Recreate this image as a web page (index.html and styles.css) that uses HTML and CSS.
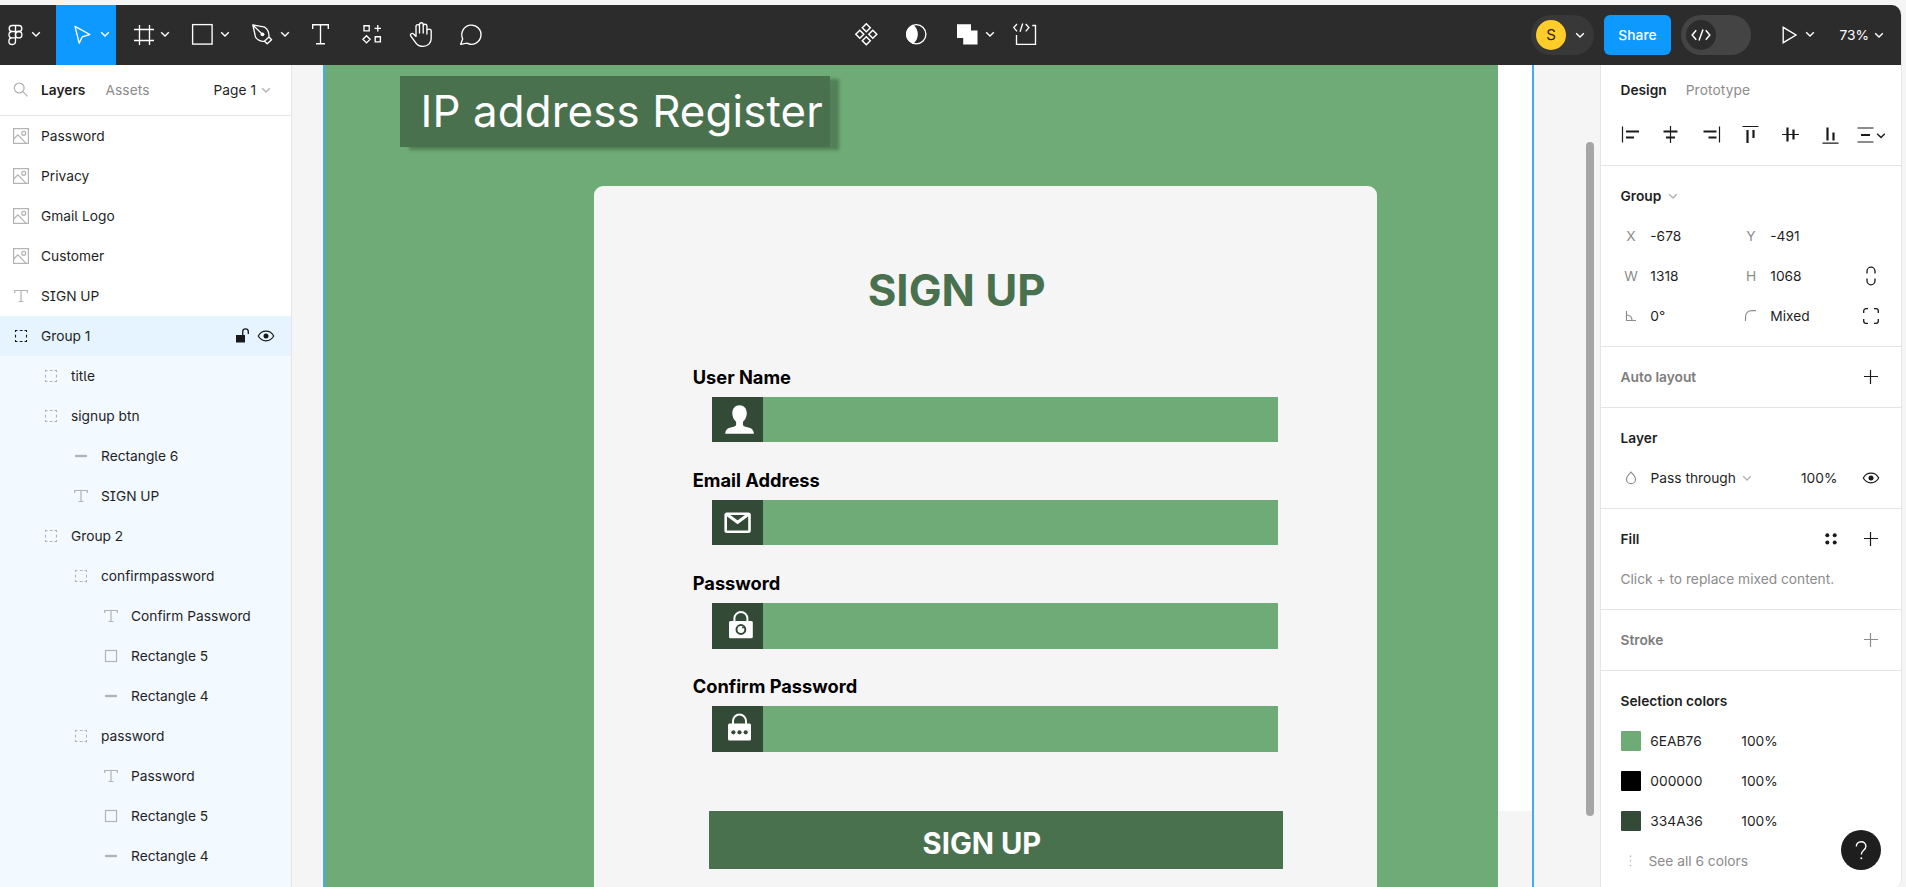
FILE: index.html
```html
<!DOCTYPE html>
<html lang="en">
<head>
<meta charset="utf-8">
<title>IP address Register</title>
<link rel="stylesheet" href="styles.css">
</head>
<body>
<svg class="defs" aria-hidden="true">
  <symbol id="chev" viewBox="0 0 10 10"><path d="M1.2 3.2 5 7l3.800-3.800" fill="none" stroke="currentColor" stroke-width="1.4"/></symbol>
  <symbol id="image" viewBox="0 0 20 20"><g fill="none" stroke="currentColor" stroke-width="1.200"><rect x="2.600" y="2.600" width="14.800" height="14.800"/><circle cx="12.700" cy="7.300" r="2"/><path d="M2.800 12.800 7 8.800l8 8.500"/></g></symbol>
  <symbol id="text" viewBox="0 0 20 20"><path d="M3.700 7V4.500h12.600V7M10 4.500v11M7.600 15.500h4.800" fill="none" stroke="currentColor" stroke-width="1.200"/></symbol>
  <symbol id="group" viewBox="0 0 20 20"><path d="M4.500 6v-1.500h2M8.800 4.500h2.800M13.500 4.500h2v1.500M15.500 8.700v2.800M15.500 14v1.500h-2M11.500 15.500h-2.800M6.500 15.500h-2v-1.500M4.500 11.500v-2.800" fill="none" stroke="currentColor" stroke-width="1.100"/></symbol>
  <symbol id="line" viewBox="0 0 20 20"><path d="M4 10h12" stroke="currentColor" stroke-width="2.400"/></symbol>
  <symbol id="rect" viewBox="0 0 20 20"><rect x="4.500" y="4.500" width="11" height="11" fill="none" stroke="currentColor" stroke-width="1.200"/></symbol>
  <symbol id="eye" viewBox="0 0 20 20"><path d="M2.300 10C4 6.800 6.800 5.200 10 5.200s6 1.600 7.700 4.800c-1.700 3.200-4.500 4.800-7.700 4.800S4 13.200 2.300 10z" fill="none" stroke="currentColor" stroke-width="1.200"/><circle cx="10" cy="10" r="2.500" fill="currentColor"/></symbol>
  <symbol id="unlock" viewBox="0 0 20 20"><rect x="4" y="9" width="9" height="7.500" fill="currentColor"/><path d="M10.700 9V5.700a2.800 2.800 0 0 1 5.600 0V8" fill="none" stroke="currentColor" stroke-width="1.300"/></symbol>
  <symbol id="plus" viewBox="0 0 20 20"><path d="M3 9.500h14M9.500 3v14" fill="none" stroke="currentColor" stroke-width="1.200"/></symbol>
</svg>
<div class="app">
  <header class="toolbar">
    <svg class="tool w56" viewBox="0 5 56 60"><g class="ln" stroke-width="1.300"><path d="M15.500 25.500h-3.300a3 3 0 0 0 0 6h3.300zM15.500 25.500h3.300a3 3 0 0 1 0 6h-3.300zM15.500 31.500h-3.300a3.200 3.200 0 0 0 0 6.400h3.300zM15.500 37.900h-3.300a3.300 3.300 0 1 0 3.300 3.400z"/><circle cx="18.700" cy="34.700" r="3.200"/></g><use href="#chev" x="31" y="29" width="10" height="10"/></svg>
    <svg class="tool w60 active" viewBox="56 5 60 60"><path class="ln" stroke-linejoin="round" d="M75 26.300 89.800 34.500 82.300 36.800 79.200 43.200z"/><use href="#chev" x="100" y="29" width="10" height="10"/></svg>
    <svg class="tool w60" viewBox="116 5 60 60"><path class="ln" d="M139.500 25v20M149.500 25v20M134 29.500h20M134 40.500h20"/><use href="#chev" x="160" y="29" width="10" height="10"/></svg>
    <svg class="tool w60" viewBox="176 5 60 60"><rect class="ln" x="192.600" y="24.600" width="19.500" height="19.500"/><use href="#chev" x="220" y="29" width="10" height="10"/></svg>
    <svg class="tool w60" viewBox="236 5 60 60"><g class="ln"><path stroke-linejoin="round" d="M252.800 24.900 264.800 27.200c3 2.200 4.400 5.600 4.200 9.800l-4.700 4.300c-3.500.2-6.600-1.300-8.700-4zM252.800 24.900l9.300 9.200M269 37l2.600 2.800-4.400 4-2.700-2.600"/></g><circle cx="262.500" cy="34.300" r="1.900" fill="#fff"/><use href="#chev" x="280" y="29" width="10" height="10"/></svg>
    <svg class="tool w50" viewBox="296 5 50 60"><path class="ln" d="M312.700 29v-4.300h15.600V29M320.500 24.700v19M316 43.700h9"/></svg>
    <svg class="tool w50" viewBox="346 5 50 60"><path class="ln" d="M364 25.700h5.200v5.200H364zM375.200 36.700h5.200v5.200h-5.200zM366.500 35.700l3.600 3.600-3.600 3.600-3.600-3.600zM377.800 25v6.500M374.500 28.300h6.500"/></svg>
    <svg class="tool w50" viewBox="396 5 50 60"><path class="ln" stroke-linejoin="round" stroke-linecap="round" d="M416 34v-7.400c0-2.600 3.500-2.600 3.500 0V33M419.500 32v-7.300c0-2.600 3.700-2.600 3.700 0V33M423.200 32.500v-6.300c0-2.600 3.700-2.600 3.700 0V34M426.900 34v-3c0-2.600 4.300-2.600 4.300 0v7.500c0 4.500-3.500 7.900-8 7.900-3.600 0-5.600-1.200-7.400-3.600l-5-6.600c-1.300-2 1.100-3.600 2.700-2.300l2.500 2.500V27"/></svg>
    <svg class="tool w50" viewBox="446 5 50 60"><path class="ln" stroke-linejoin="round" d="M460.700 44.300 462.700 38.800a9.600 9.600 0 1 1 4.200 4.400z"/></svg>

    <svg class="tool w50 middle" viewBox="841 5 50 60"><path class="ln" stroke-width="1.500" d="M866.300 23.800l4 4-4 4-4-4zM866.300 36.800l4 4-4 4-4-4zM859.800 30.300l4 4-4 4-4-4zM872.800 30.300l4 4-4 4-4-4z"/></svg>
    <svg class="tool w50" viewBox="891 5 50 60"><circle class="ln" cx="916.300" cy="34.200" r="9.600"/><path fill="#fff" d="M913.500 25C919.300 30 919.300 38.500 913.500 43.500 903.500 41 903.500 27.500 913.500 25z"/></svg>
    <svg class="tool w60" viewBox="941 5 60 60"><path fill="#fff" d="M957 24.300h14v6.200h6.500v14h-14.300v-6.500H957z"/><use href="#chev" x="985" y="29" width="10" height="10"/></svg>
    <svg class="tool w50" viewBox="1001 5 50 60"><path class="ln" d="M1016.500 35v9.300h19V25.500h-3.200M1017 24l-3.200 3.600 3.200 3.800M1025.700 24l3.200 3.600-3.200 3.800M1022.700 23.500l-2.700 8.300"/></svg>

    <div class="account"><span class="avatar">S</span><svg class="ch"><use href="#chev"/></svg></div>
    <button class="share">Share</button>
    <div class="devmode"><svg viewBox="0 0 30 30"><circle cx="15" cy="15" r="15" fill="#2c2c2c"/><path class="ln" stroke-width="1.500" d="M10.200 10.200 6.200 15l4 4.800M19.800 10.200l4 4.800-4 4.800M17 9.500l-4 11"/></svg></div>
    <svg class="tool play" viewBox="1771 5 50 60"><path class="ln" d="M1783.200 27.300v15.400L1796 35z"/><use href="#chev" x="1805" y="29" width="10" height="10"/></svg>
    <div class="zoom">73%<svg class="ch"><use href="#chev"/></svg></div>
  </header>

  <div class="body">
    <aside class="layers">
      <div class="layers-head">
        <svg class="search" viewBox="0 0 20 20"><g fill="none" stroke="currentColor" stroke-width="1.300"><circle cx="8.200" cy="8" r="4.900"/><path d="M11.800 11.600l4.800 4.800"/></g></svg>
        <b>Layers</b><span class="assets">Assets</span><span class="pagesel">Page 1<svg class="ch"><use href="#chev"/></svg></span>
      </div>
      <div class="row"><svg class="ic"><use href="#image"/></svg>Password</div>
      <div class="row"><svg class="ic"><use href="#image"/></svg>Privacy</div>
      <div class="row"><svg class="ic"><use href="#image"/></svg>Gmail Logo</div>
      <div class="row"><svg class="ic"><use href="#image"/></svg>Customer</div>
      <div class="row"><svg class="ic"><use href="#text"/></svg>SIGN UP</div>
      <div class="row selected"><svg class="ic"><use href="#group"/></svg>Group 1<svg class="lock"><use href="#unlock"/></svg><svg class="vis"><use href="#eye"/></svg></div>
      <div class="row child d1"><svg class="ic"><use href="#group"/></svg>title</div>
      <div class="row child d1"><svg class="ic"><use href="#group"/></svg>signup btn</div>
      <div class="row child d2"><svg class="ic"><use href="#line"/></svg>Rectangle 6</div>
      <div class="row child d2"><svg class="ic"><use href="#text"/></svg>SIGN UP</div>
      <div class="row child d1"><svg class="ic"><use href="#group"/></svg>Group 2</div>
      <div class="row child d2"><svg class="ic"><use href="#group"/></svg>confirmpassword</div>
      <div class="row child d3"><svg class="ic"><use href="#text"/></svg>Confirm Password</div>
      <div class="row child d3"><svg class="ic"><use href="#rect"/></svg>Rectangle 5</div>
      <div class="row child d3"><svg class="ic"><use href="#line"/></svg>Rectangle 4</div>
      <div class="row child d2"><svg class="ic"><use href="#group"/></svg>password</div>
      <div class="row child d3"><svg class="ic"><use href="#text"/></svg>Password</div>
      <div class="row child d3"><svg class="ic"><use href="#rect"/></svg>Rectangle 5</div>
      <div class="row child d3"><svg class="ic"><use href="#line"/></svg>Rectangle 4</div>
      <div class="row child"></div>
    </aside>

    <main class="canvas">
      <div class="frame">
        <div class="design">
          <div class="title"><span>IP address Register</span></div>
          <section class="card">
            <h1>SIGN UP</h1>
            <div class="field"><label>User Name</label><div class="input"><svg viewBox="712 397 51.300 45.500"><path fill="#fff" d="M739.500 405.200c4.400 0 7.300 3.200 7.300 7.900 0 3.600-1.400 6.600-3.800 8.700v2.800c0 1 .6 1.500 1.600 1.800l4.700 1.300c3 .9 4.600 2.800 4.600 6.100h-28.700c0-3.300 1.600-5.200 4.600-6.100l4.700-1.300c1-.3 1.600-.8 1.600-1.800v-2.800c-2.400-2.100-3.800-5.100-3.800-8.700 0-4.700 2.900-7.900 7.200-7.900z"/></svg></div></div>
            <div class="field"><label>Email Address</label><div class="input"><svg viewBox="712 500 51.300 45.500"><g fill="none" stroke="#fff" stroke-width="2.600"><rect x="725.700" y="513.700" width="23.800" height="18" rx="1.200"/><path stroke-width="3" d="M727 514.500 737.600 522.300 748.200 514.500"/></g></svg></div></div>
            <div class="field"><label>Password</label><div class="input"><svg viewBox="712 603 51.300 45.500"><rect x="729" y="621" width="23.800" height="17.300" rx="1.500" fill="#fff"/><path d="M734.400 622v-3.500a6.500 6.500 0 0 1 13 0v3.500" fill="none" stroke="#fff" stroke-width="2"/><circle cx="740.900" cy="629.500" r="4.400" fill="#fff" stroke="#334a36" stroke-width="2"/><circle cx="743" cy="627.500" r="1" fill="#334a36"/></svg></div></div>
            <div class="field"><label>Confirm Password</label><div class="input"><svg viewBox="712 706.400 51.300 45.500"><rect x="728" y="724" width="23" height="17" rx="1.500" fill="#fff"/><path d="M733 725v-3.500a6.500 6.500 0 0 1 13 0v3.500" fill="none" stroke="#fff" stroke-width="2"/><g fill="#334a36"><circle cx="733.400" cy="732.700" r="2.100"/><circle cx="739.500" cy="732.700" r="2.100"/><circle cx="745.700" cy="732.700" r="2.100"/></g></svg></div></div>
            <div class="submit">SIGN UP</div>
          </section>
        </div>
        <div class="artboard"></div>
      </div>
      <div class="scrollbar"></div>
    </main>

    <aside class="inspector">
      <div class="sec top">
        <div class="tabs"><b>Design</b><span>Prototype</span></div>
        <svg class="align" viewBox="1601 115 300 40"><g fill="none" stroke="#1a1a1a">
          <path stroke-width="1.200" d="M1622.500 126.500v16"/><path stroke-width="2.200" d="M1626 131.500h13M1626 137.500h8"/>
          <path stroke-width="1.200" d="M1670.500 126v17"/><path stroke-width="2.200" d="M1663.500 131.500h14M1666 137.500h9"/>
          <path stroke-width="1.200" d="M1719.500 126.500v16"/><path stroke-width="2.200" d="M1703.500 131.500h13M1708.500 137.500h8"/>
          <path stroke-width="1.200" d="M1742.500 126.500h16"/><path stroke-width="2.200" d="M1747.500 130v13M1753.500 130v8"/>
          <path stroke-width="1.200" d="M1782 134.500h17"/><path stroke-width="2.200" d="M1787.500 127.500v14M1793.500 129.500v10"/>
          <path stroke-width="1.200" d="M1822.500 143.200h16"/><path stroke-width="2.200" d="M1827.500 127.500v13M1833.500 132.500v8"/>
          <path stroke-width="1.200" d="M1857.500 128h16M1857.500 142h16"/><path stroke-width="2.200" d="M1861 135h9"/></g>
          <use href="#chev" x="1876" y="130.500" width="10" height="10"/></svg>
      </div>
      <div class="sec">
        <div class="prow"><b>Group</b><svg class="ch grey"><use href="#chev"/></svg></div>
        <div class="grid"><i>X</i><span>-678</span><i>Y</i><span>-491</span></div>
        <div class="grid"><i>W</i><span>1318</span><i>H</i><span>1068</span><svg viewBox="0 0 20 20"><path class="dk" d="M6 7.500V5.200a3.800 3.800 0 0 1 8 0v2.300M6 12.500v2.300a3.800 3.800 0 0 0 8 0v-2.300"/></svg></div>
        <div class="grid"><svg viewBox="0 0 20 20"><path class="gl" d="M5.500 5v9.500h9.500M5.500 9c3.500 0 5.500 2 5.500 5.500"/></svg><span>0°</span><svg viewBox="0 0 20 20"><path class="gl" d="M4.500 15v-4c0-4 2.500-6.300 6.500-6.300h4"/></svg><span>Mixed</span><svg viewBox="0 0 20 20"><path class="dk" d="M2.700 7V5a2.300 2.300 0 0 1 2.300-2.300h2M13 2.700h2A2.300 2.300 0 0 1 17.300 5v2M17.300 13v2a2.300 2.300 0 0 1-2.300 2.300h-2M7 17.300H5A2.300 2.300 0 0 1 2.700 15v-2"/></svg></div>
      </div>
      <div class="sec"><div class="prow muted"><b>Auto layout</b><svg class="ri dark"><use href="#plus"/></svg></div></div>
      <div class="sec">
        <div class="prow"><b>Layer</b></div>
        <div class="prow"><svg class="li" viewBox="0 0 20 20"><path class="gl" d="M10 4.200c2.300 2.300 4.500 4.600 4.500 7a4.500 4.500 0 0 1-9 0c0-2.400 2.200-4.700 4.500-7z"/></svg><span>Pass through</span><svg class="ch grey"><use href="#chev"/></svg><span class="opacity">100%</span><svg class="ri2 dark"><use href="#eye"/></svg></div>
      </div>
      <div class="sec">
        <div class="prow"><b>Fill</b><svg class="dots" viewBox="0 0 20 20"><g fill="#1a1a1a"><circle cx="6.300" cy="6.200" r="2"/><circle cx="13.700" cy="6.200" r="2"/><circle cx="6.300" cy="13.600" r="2"/><circle cx="13.700" cy="13.600" r="2"/></g></svg><svg class="ri2 dark"><use href="#plus"/></svg></div>
        <div class="prow hint">Click + to replace mixed content.</div>
      </div>
      <div class="sec"><div class="prow muted"><b>Stroke</b><svg class="ri"><use href="#plus"/></svg></div></div>
      <div class="sec last">
        <div class="prow"><b>Selection colors</b></div>
        <div class="grid color"><span class="sw green"></span><span>6EAB76</span><span>100%</span></div>
        <div class="grid color"><span class="sw black"></span><span>000000</span><span>100%</span></div>
        <div class="grid color"><span class="sw deep"></span><span>334A36</span><span>100%</span></div>
        <div class="prow hint"><svg class="more" viewBox="0 0 20 20"><path d="M9.500 4.500v12" stroke="#b3b3b3" stroke-width="1.400" stroke-dasharray="1.400 3.300"/></svg>See all 6 colors</div>
      </div>
    </aside>
  </div>
  <div class="help"><svg viewBox="0 0 40 40"><path d="M15.300 16.500c0-2.800 2-4.700 4.800-4.700s4.800 1.900 4.800 4.500c0 4-4.600 4-4.600 8.200" fill="none" stroke="#fff" stroke-width="1.400"/><circle cx="20.300" cy="28.300" r="1" fill="#fff"/></svg></div>
</div>
</body>
</html>
```
FILE: styles.css
```css
* { box-sizing: border-box; }
body {
  margin: 0;
  height: 887px;
  overflow: hidden;
  background: #f5f5f5;
  color: #1f1f1f;
  font: 13.75px/20px Inter, "Liberation Sans", sans-serif;
}
b { font-weight: 600; }
i { font-style: normal; }
svg { display: block; flex: none; }
.defs { position: absolute; width: 0; height: 0; }
.app {
  margin-top: 5px;
  width: 1902px;
  height: 882px;
  border-radius: 0 10px 8px 0;
  overflow: hidden;
  border-right: 1px solid #e5e5e5;
  background: #fff;
}
.ch { width: 10px; height: 10px; color: inherit; }
.ch.grey { color: #b3b3b3; }
.ln { fill: none; stroke: #fff; stroke-width: 1.35; }
.ln[stroke-width="1.500"] { stroke-width: 1.5; }

/* Toolbar */
.toolbar {
  display: flex;
  align-items: center;
  height: 60px;
  background: #2c2c2c;
  color: #fff;
}
.tool { height: 60px; }
.w50 { width: 50px; }
.w56 { width: 56px; }
.w60 { width: 60px; }
.active { background: #0d99ff; }
.middle { margin-left: 345px; }
.account {
  display: flex;
  align-items: center;
  gap: 9px;
  width: 63px;
  height: 40px;
  margin-left: 480px;
  padding-left: 5px;
  border-radius: 20px;
  background: #383838;
}
.avatar {
  width: 30px;
  height: 30px;
  border-radius: 50%;
  background: #ffcd29;
  color: #2a2208;
  font-size: 15px;
  line-height: 30px;
  text-align: center;
}
.share {
  width: 67px;
  height: 40px;
  margin: 0 10px;
  padding: 0;
  border: 0;
  border-radius: 6px;
  background: #0d99ff;
  color: #fff;
  font: 500 13.75px/40px Inter, sans-serif;
  letter-spacing: .1px;
}
.devmode {
  width: 70px;
  height: 40px;
  padding: 5px;
  border-radius: 20px;
  background: #444;
}
.devmode svg { width: 30px; height: 30px; }
.play { width: 50px; margin-left: 20px; }
.zoom {
  display: flex;
  align-items: center;
  gap: 5px;
  margin-left: 18.500px;
}

/* Layers panel */
.body { display: flex; height: 822px; }
.layers {
  flex: none;
  width: 292px;
  overflow: hidden;
  border-right: 1px solid #e5e5e5;
  background: #fff;
}
.layers-head {
  display: flex;
  align-items: center;
  height: 51px;
  padding-left: 11px;
  border-bottom: 1px solid #e5e5e5;
}
.search { width: 20px; height: 20px; margin-right: 10px; color: #b3b3b3; }
.assets { margin-left: 20px; color: #8c8c8c; letter-spacing: .1px; }
.pagesel {
  display: flex;
  align-items: center;
  gap: 5px;
  margin-left: auto;
  margin-right: 20px;
}
.pagesel .ch { color: #b3b3b3; }
.row {
  display: flex;
  align-items: center;
  height: 40px;
  padding-left: 11px;
  font-feature-settings: "cv05", "cv08";
}
.ic { width: 20px; height: 20px; margin-right: 10px; color: #b3b3b3; }
.selected { background: #e5f4ff; }
.selected .ic { color: #1a1a1a; }
.child { background: #f2f9ff; }
.d1 { padding-left: 41px; }
.d2 { padding-left: 71px; }
.d3 { padding-left: 101px; }
.lock { width: 20px; height: 20px; margin-left: auto; margin-right: 4px; color: #1a1a1a; }
.vis { width: 20px; height: 20px; margin-right: 15px; color: #1a1a1a; }

/* Canvas */
.canvas {
  position: relative;
  flex: none;
  width: 1308px;
  overflow: hidden;
  background: #f5f5f5;
}
.frame {
  display: flex;
  width: 1211px;
  height: 822px;
  margin-left: 31px;
  border: solid #45aaf6;
  border-width: 0 2px;
}
.design {
  width: 1172.600px;
  height: 822px;
  padding-top: 11px;
  background: #6eab76;
}
.artboard { flex: 1; height: 746px; background: #fff; }
.title {
  width: 430px;
  height: 71.300px;
  margin-left: 74.600px;
  padding-left: 21px;
  background: #49714e;
  box-shadow: 9px 3px 3px rgba(0, 0, 0, .25);
  color: #fff;
  font-size: 43.800px;
  line-height: 72px;
  letter-spacing: .13px;
  white-space: nowrap;
}
.card {
  width: 783px;
  height: 760px;
  margin: 39.200px 0 0 268.700px;
  padding: 83px 0 0 99px;
  border-radius: 9px;
  background: #f5f5f5;
}
h1 {
  margin: 0 0 53.300px 175px;
  color: #49714e;
  font-size: 43.800px;
  font-weight: 700;
  line-height: 44px;
}
.field { height: 103.200px; color: #000; }
.field label {
  display: block;
  margin-bottom: 10px;
  font-size: 18.250px;
  font-weight: 700;
  line-height: 20px;
}
.input {
  width: 566px;
  height: 45.500px;
  margin-left: 19.300px;
  background: #6eab76;
}
.input svg { width: 51.300px; height: 45.500px; background: #334a36; }
.submit {
  width: 574px;
  height: 58.700px;
  margin: 31.200px 0 0 16.300px;
  padding: 8px 0 0 213.600px;
  background: #49714e;
  color: #fff;
  font-size: 29.200px;
  font-weight: 700;
  line-height: 50px;
}
.scrollbar {
  position: absolute;
  left: 1293.500px;
  top: 77px;
  width: 8px;
  height: 674px;
  border-radius: 4px;
  background: #a6a6a6;
}

/* Inspector */
.inspector {
  flex: none;
  width: 301px;
  border-left: 1px solid #e5e5e5;
  background: #fff;
}
.sec { padding: 10px 0; border-bottom: 1px solid #e5e5e5; }
.top { padding-top: 0; }
.last { border: 0; }
.tabs { display: flex; align-items: center; gap: 19px; height: 50px; padding-left: 19.500px; }
.tabs span { color: #8c8c8c; letter-spacing: .1px; }
.align { width: 300px; height: 40px; color: #1a1a1a; }
.prow { display: flex; align-items: center; height: 40px; padding-left: 19.500px; }
.prow > .ch { margin-left: 6.500px; }
.muted { color: #7d7d7d; }
.hint { color: #8c8c8c; }
.ri, .ri2, .li, .dots, .more { width: 20px; height: 20px; }
.ri, .ri2 { margin-right: 20px; color: #8c8c8c; }
.ri { margin-left: auto; }
.dark { color: #1a1a1a; }
.li { margin-right: 10px; }
.opacity { width: 60px; margin-left: auto; }
.dots { margin-left: auto; margin-right: 20px; }
.more { margin-right: 8px; }
.grid {
  display: grid;
  grid-template-columns: 20px 100px 20px 100px 20px;
  align-items: center;
  height: 40px;
  padding-left: 20px;
}
.grid > span:not(.sw) { padding-left: 9.300px; }
.grid i { color: #8c8c8c; text-align: center; }
.grid svg { width: 20px; height: 20px; }
.color { grid-template-columns: 20px 91px 90px; }
.sw { width: 20px; height: 20px; border-radius: 1px; }
.green { background: #6eab76; }
.black { background: #000; }
.deep { background: #334a36; }
.dk { fill: none; stroke: #1a1a1a; stroke-width: 1.3; }
.gl { fill: none; stroke: #8c8c8c; stroke-width: 1.2; }
.help {
  position: absolute;
  left: 1841px;
  top: 830px;
  width: 40px;
  height: 40px;
  border-radius: 50%;
  background: #1e1e1e;
}
```
